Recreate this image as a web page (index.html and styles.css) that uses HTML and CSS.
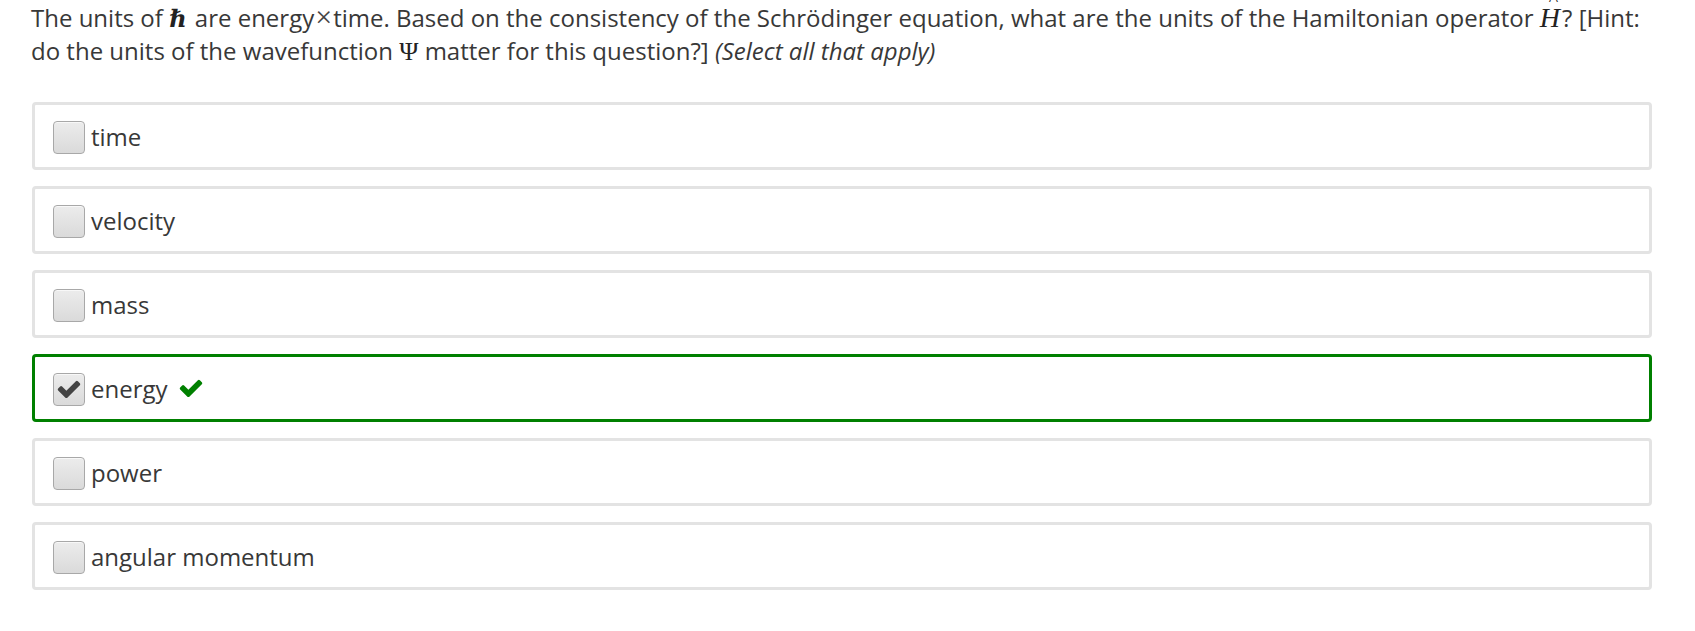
FILE: index.html
```html
<!DOCTYPE html>
<html>
<head>
<meta charset="utf-8">
<link rel="stylesheet" href="styles.css">
</head>
<body>
<div class="page">
  <p class="question">The units of <span class="math hbar">ℏ</span> are energy<span class="times">×</span>time. Based on the consistency of the Schrödinger equation, what are the units of the Hamiltonian operator <span class="math hat-h"><span class="hat">^</span>H</span>? [Hint: do the units of the wavefunction <span class="math psi">Ψ</span> matter for this question?] <em>(Select all that apply)</em></p>
  <div class="options">
    <label class="option"><span class="box"></span><span class="label">time</span></label>
    <label class="option"><span class="box"></span><span class="label">velocity</span></label>
    <label class="option"><span class="box"></span><span class="label">mass</span></label>
    <label class="option correct"><span class="box checked"><svg viewBox="0 0 1792 1792" class="tick"><path d="M1671 566q0 40-28 68l-724 724-136 136q-28 28-68 28t-68-28l-136-136-362-362q-28-28-28-68t28-68l136-136q28-28 68-28t68 28l294 295 656-657q28-28 68-28t68 28l136 136q28 28 28 68z"/></svg></span><span class="label">energy</span><svg viewBox="0 0 1792 1792" class="ok"><path d="M1671 566q0 40-28 68l-724 724-136 136q-28 28-68 28t-68-28l-136-136-362-362q-28-28-28-68t28-68l136-136q28-28 68-28t68 28l294 295 656-657q28-28 68-28t68 28l136 136q28 28 28 68z"/></svg></label>
    <label class="option"><span class="box"></span><span class="label">power</span></label>
    <label class="option"><span class="box"></span><span class="label">angular momentum</span></label>
  </div>
</div>
</body>
</html>
```

FILE: styles.css
```css
html, body {
  margin: 0;
  padding: 0;
  background: #fff;
}
.page {
  font-family: "Open Sans", "Liberation Sans", sans-serif;
  color: #383838;
  font-size: 24px;
  padding: 1px 40px 0 31px;
}
.question {
  margin: 0;
  line-height: 32px;
}
.question em {
  font-style: italic;
}
.math {
  font-family: "Liberation Serif", "DejaVu Serif", serif;
  color: #222;
}
.hbar {
  font-family: "DejaVu Serif", serif;
  font-weight: bold;
  font-style: italic;
  font-size: 24px;
  padding-right: 2px;
}
.times {
  font-family: "Liberation Serif", serif;
  font-size: 30px;
  color: #444;
  padding: 0 1px;
}
.psi {
  font-size: 26px;
}
.hat-h {
  position: relative;
  font-style: italic;
  font-size: 28px;
  padding-right: 2px;
}
.hat {
  position: absolute;
  left: 9px;
  top: -19px;
  font-style: normal;
  font-size: 20px;
}
.options {
  margin: 34px 0 0 1px;
  display: flex;
  flex-direction: column;
  gap: 16px;
  width: 1620px;
}
.option {
  box-sizing: border-box;
  height: 68px;
  border: 3px solid #e3e3e3;
  border-radius: 4px;
  display: flex;
  align-items: center;
  padding: 2px 0 0 18px;
}
.option.correct {
  border-color: #008000;
}
.box {
  box-sizing: border-box;
  width: 32px;
  height: 33px;
  border: 1px solid #a8a8a8;
  border-radius: 4px;
  background: linear-gradient(#ececec, #dadada);
  box-shadow: inset 0 1px 0 #f8f8f8;
  display: flex;
  align-items: center;
  justify-content: center;
  flex: none;
}
.tick {
  width: 26px;
  height: 26px;
  fill: #444;
}
.label {
  margin-left: 6px;
  line-height: 32px;
}
.ok {
  width: 26px;
  height: 26px;
  fill: #008000;
  margin-left: 10px;
  margin-top: -2px;
}
```
